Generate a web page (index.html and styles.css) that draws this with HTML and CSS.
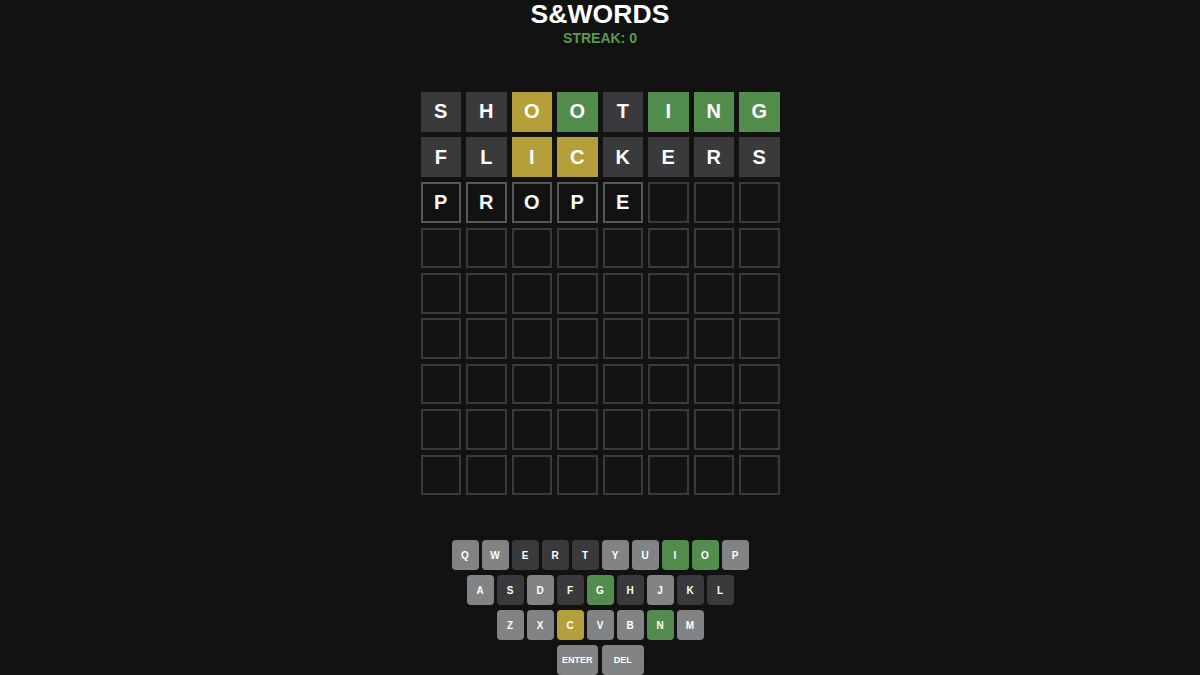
FILE: index.html
```html
<!DOCTYPE html>
<html lang="en">
<head>
<meta charset="utf-8">
<title>S&amp;WORDS</title>
<link rel="stylesheet" href="styles.css">
</head>
<body>
<div class="app">
  <header class="header">
    <h1 class="title">S&amp;WORDS</h1>
    <div class="streak">STREAK: 0</div>
  </header>
  <main class="board">
    <div class="tile gray">S</div><div class="tile gray">H</div><div class="tile yellow">O</div><div class="tile green">O</div><div class="tile gray">T</div><div class="tile green">I</div><div class="tile green">N</div><div class="tile green">G</div>
    <div class="tile gray">F</div><div class="tile gray">L</div><div class="tile yellow">I</div><div class="tile yellow">C</div><div class="tile gray">K</div><div class="tile gray">E</div><div class="tile gray">R</div><div class="tile gray">S</div>
    <div class="tile typed">P</div><div class="tile typed">R</div><div class="tile typed">O</div><div class="tile typed">P</div><div class="tile typed">E</div><div class="tile"></div><div class="tile"></div><div class="tile"></div>
    <div class="tile"></div><div class="tile"></div><div class="tile"></div><div class="tile"></div><div class="tile"></div><div class="tile"></div><div class="tile"></div><div class="tile"></div>
    <div class="tile"></div><div class="tile"></div><div class="tile"></div><div class="tile"></div><div class="tile"></div><div class="tile"></div><div class="tile"></div><div class="tile"></div>
    <div class="tile"></div><div class="tile"></div><div class="tile"></div><div class="tile"></div><div class="tile"></div><div class="tile"></div><div class="tile"></div><div class="tile"></div>
    <div class="tile"></div><div class="tile"></div><div class="tile"></div><div class="tile"></div><div class="tile"></div><div class="tile"></div><div class="tile"></div><div class="tile"></div>
    <div class="tile"></div><div class="tile"></div><div class="tile"></div><div class="tile"></div><div class="tile"></div><div class="tile"></div><div class="tile"></div><div class="tile"></div>
    <div class="tile"></div><div class="tile"></div><div class="tile"></div><div class="tile"></div><div class="tile"></div><div class="tile"></div><div class="tile"></div><div class="tile"></div>
  </main>
  <section class="keyboard">
    <div class="krow">
      <button class="key">Q</button><button class="key">W</button><button class="key absent">E</button><button class="key absent">R</button><button class="key absent">T</button><button class="key">Y</button><button class="key">U</button><button class="key correct">I</button><button class="key correct">O</button><button class="key">P</button>
    </div>
    <div class="krow">
      <button class="key">A</button><button class="key absent">S</button><button class="key">D</button><button class="key absent">F</button><button class="key correct">G</button><button class="key absent">H</button><button class="key">J</button><button class="key absent">K</button><button class="key absent">L</button>
    </div>
    <div class="krow">
      <button class="key">Z</button><button class="key">X</button><button class="key present">C</button><button class="key">V</button><button class="key">B</button><button class="key correct">N</button><button class="key">M</button>
    </div>
    <div class="krow wide-row">
      <button class="key wide">ENTER</button><button class="key wide">DEL</button>
    </div>
  </section>
</div>
</body>
</html>
```
FILE: styles.css
```css
html, body {
  margin: 0;
  padding: 0;
  background: #121212;
  height: 100%;
  overflow: hidden;
}
.app {
  display: flex;
  flex-direction: column;
  align-items: center;
  font-family: "Liberation Sans", Arial, sans-serif;
  color: #ffffff;
}
.header {
  display: flex;
  flex-direction: column;
  align-items: center;
  padding-top: 1px;
}
.title {
  margin: 0;
  font-size: 26.5px;
  line-height: 26.5px;
  font-weight: 700;
  letter-spacing: 0.1px;
}
.streak {
  margin-top: 3px;
  font-size: 14px;
  line-height: 14px;
  font-weight: 700;
  color: #5a9a4f;
}
.board {
  margin-top: 47px;
  display: grid;
  grid-template-columns: repeat(8, 40.5px);
  grid-auto-rows: 40.5px;
  column-gap: 5px;
  row-gap: 4.9px;
}
.tile {
  box-sizing: border-box;
  display: flex;
  align-items: center;
  justify-content: center;
  border: 2px solid #3a3a3b;
  background: #141414;
  font-size: 20px;
  font-weight: 700;
  color: #fff;
}
.tile.gray {
  background: #3a3a3c;
  border-color: #3a3a3c;
}
.tile.yellow {
  background: #b59f3b;
  border-color: #b59f3b;
}
.tile.green {
  background: #538d4e;
  border-color: #538d4e;
}
.tile.typed {
  border-color: #565758;
  background: #121212;
}
.keyboard {
  margin-top: 45px;
  display: flex;
  flex-direction: column;
  align-items: center;
  gap: 5px;
}
.krow {
  display: flex;
  gap: 3px;
}
.wide-row {
  gap: 4px;
}
.key {
  width: 27px;
  height: 30px;
  padding: 0;
  border: none;
  border-radius: 4px;
  background: #818384;
  color: #fff;
  font-family: "Liberation Sans", Arial, sans-serif;
  font-size: 10px;
  font-weight: 700;
  display: flex;
  align-items: center;
  justify-content: center;
}
.key.absent {
  background: #3a3a3c;
}
.key.correct {
  background: #538d4e;
}
.key.present {
  background: #b59f3b;
}
.key.wide {
  width: 41.5px;
  font-size: 9px;
}
```
